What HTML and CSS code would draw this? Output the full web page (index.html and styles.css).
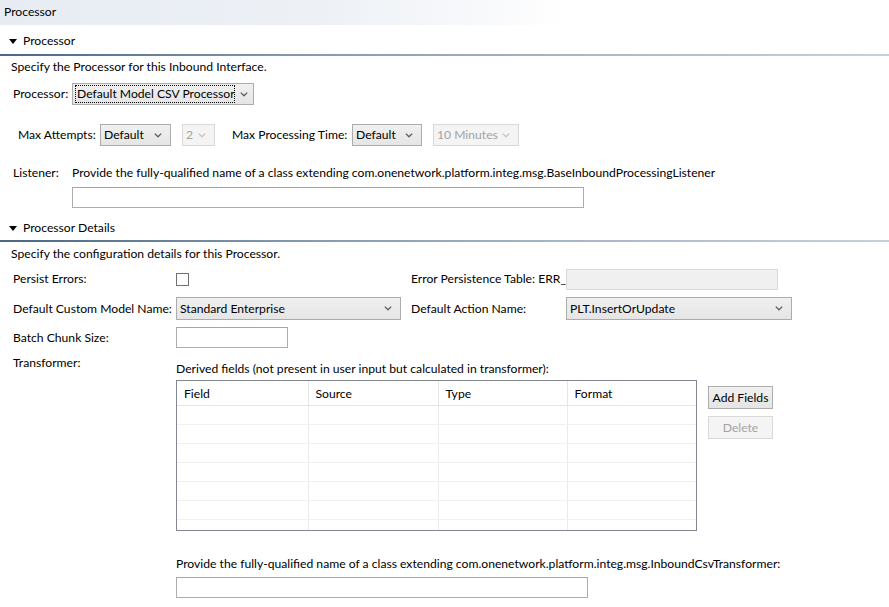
FILE: index.html
```html
<!DOCTYPE html>
<html>
<head>
<meta charset="utf-8">
<title>Processor</title>
<link rel="stylesheet" href="styles.css">
</head>
<body>
<div class="titlebar">Processor</div>

<div class="sec-head"><span class="twisty"></span><span>Processor</span></div>
<div class="sec-line"></div>
<div class="sec1">
  <div class="desc">Specify the Processor for this Inbound Interface.</div>

  <div class="row proc-row">
    <span class="lbl lbl-proc">Processor:</span>
    <div class="combo w-proc"><span class="focus">Default Model CSV Processor</span><svg class="chev" width="8" height="5" viewBox="0 0 8 5"><polyline points="0.8,0.6 4,3.8 7.2,0.6" fill="none" stroke="#5c5c5c" stroke-width="1.3"/></svg></div>
  </div>

  <div class="row max-row">
    <span class="lbl lbl-max">Max Attempts:</span>
    <div class="combo w-att"><span>Default</span><svg class="chev" width="8" height="5" viewBox="0 0 8 5"><polyline points="0.8,0.6 4,3.8 7.2,0.6" fill="none" stroke="#5c5c5c" stroke-width="1.3"/></svg></div>
    <div class="combo disabled w-num"><span>2</span><svg class="chev" width="8" height="5" viewBox="0 0 8 5"><polyline points="0.8,0.6 4,3.8 7.2,0.6" fill="none" stroke="#c4c4c4" stroke-width="1.3"/></svg></div>
    <span class="lbl lbl-time">Max Processing Time:</span>
    <div class="combo w-def"><span>Default</span><svg class="chev" width="8" height="5" viewBox="0 0 8 5"><polyline points="0.8,0.6 4,3.8 7.2,0.6" fill="none" stroke="#5c5c5c" stroke-width="1.3"/></svg></div>
    <div class="combo disabled w-min"><span>10 Minutes</span><svg class="chev" width="8" height="5" viewBox="0 0 8 5"><polyline points="0.8,0.6 4,3.8 7.2,0.6" fill="none" stroke="#c4c4c4" stroke-width="1.3"/></svg></div>
  </div>

  <div class="row listener-row">
    <span class="lbl lbl-proc">Listener:</span>
    <span>Provide the fully-qualified name of a class extending com.onenetwork.platform.integ.msg.BaseInboundProcessingListener</span>
  </div>
  <div class="listener-input"><div class="textbox w-listener"></div></div>
</div>

<div class="sec-head sec-head2"><span class="twisty"></span><span>Processor Details</span></div>
<div class="sec-line"></div>
<div class="sec2">
  <div class="desc desc2">Specify the configuration details for this Processor.</div>

  <div class="drow r1">
    <span class="dlbl">Persist Errors:</span>
    <div class="dcol"><span class="checkbox"></span></div>
    <span class="dlbl2">Error Persistence Table: ERR_</span>
    <div class="textbox disabled w-err"></div>
  </div>

  <div class="drow r2">
    <span class="dlbl">Default Custom Model Name:</span>
    <div class="dcol"><div class="combo w-model"><span>Standard Enterprise</span><svg class="chev" width="8" height="5" viewBox="0 0 8 5"><polyline points="0.8,0.6 4,3.8 7.2,0.6" fill="none" stroke="#5c5c5c" stroke-width="1.3"/></svg></div></div>
    <span class="dlbl2">Default Action Name:</span>
    <div class="combo w-action"><span>PLT.InsertOrUpdate</span><svg class="chev" width="8" height="5" viewBox="0 0 8 5"><polyline points="0.8,0.6 4,3.8 7.2,0.6" fill="none" stroke="#5c5c5c" stroke-width="1.3"/></svg></div>
  </div>

  <div class="drow r3">
    <span class="dlbl">Batch Chunk Size:</span>
    <div class="dcol"><div class="textbox w-batch"></div></div>
  </div>

  <div class="trans">
    <span class="dlbl trans-lbl">Transformer:</span>
    <div class="trans-body">
      <div class="derived">Derived fields (not present in user input but calculated in transformer):</div>
      <div class="table-area">
        <div class="grid-box">
          <table class="grid">
            <thead>
              <tr><th>Field</th><th>Source</th><th>Type</th><th>Format</th></tr>
            </thead>
            <tbody>
              <tr><td></td><td></td><td></td><td></td></tr>
              <tr><td></td><td></td><td></td><td></td></tr>
              <tr><td></td><td></td><td></td><td></td></tr>
              <tr><td></td><td></td><td></td><td></td></tr>
              <tr><td></td><td></td><td></td><td></td></tr>
              <tr><td></td><td></td><td></td><td></td></tr>
              <tr><td></td><td></td><td></td><td></td></tr>
            </tbody>
          </table>
        </div>
        <div class="btns">
          <div class="btn">Add Fields</div>
          <div class="btn disabled">Delete</div>
        </div>
      </div>
      <div class="provide">Provide the fully-qualified name of a class extending com.onenetwork.platform.integ.msg.InboundCsvTransformer:</div>
      <div class="textbox w-trans"></div>
    </div>
  </div>
</div>
</body>
</html>
```

FILE: styles.css
```css
* { box-sizing: border-box; }

html, body {
  margin: 0;
  padding: 0;
  background: #ffffff;
}

body {
  width: 889px;
  height: 607px;
  overflow: hidden;
  font-family: "Lato", "Open Sans", sans-serif;
  font-size: 12.15px;
  line-height: 16px;
  color: #000000;
}

.titlebar {
  height: 25px;
  line-height: 24px;
  padding-left: 4px;
  background: linear-gradient(to right, #e7ecf3 0, #edf1f6 320px, #f8f9fb 480px, #ffffff 570px);
}

.sec-head {
  display: flex;
  align-items: center;
  height: 29px;
  padding: 8px 0 5px 9px;
}

.sec-head2 {
  height: 32px;
  padding: 12px 0 4px 9px;
}

.twisty {
  width: 0;
  height: 0;
  border-left: 4px solid transparent;
  border-right: 4px solid transparent;
  border-top: 5px solid #000000;
  margin-right: 6px;
}

.sec-line {
  height: 2px;
  background: linear-gradient(to right, #4a6784 0, #7f97ad 280px, #a5b6c6 560px, #c6d1dc 889px);
}

.desc {
  margin-top: 3px;
  padding-left: 11px;
}

.row {
  display: flex;
  align-items: center;
}

.lbl-proc { width: 59px; flex: none; }

.proc-row {
  margin-top: 8px;
  padding-left: 13px;
  height: 22px;
}

.max-row {
  margin-top: 19px;
  padding-left: 18px;
  height: 22px;
}

.lbl-max { width: 82px; }
.lbl-time { width: 120px; margin-left: 17px; }

.combo {
  display: flex;
  align-items: center;
  justify-content: space-between;
  height: 100%;
  padding: 0 8px 0 3px;
  background: linear-gradient(#f0f0f0, #e5e5e5);
  border: 1px solid #acacac;
  white-space: nowrap;
}

.combo.disabled {
  background: #f4f4f4;
  border-color: #d9d9d9;
  color: #a3a3a3;
}

.combo .focus {
  flex: none;
  outline: 1px dotted #000000;
  outline-offset: 0;
  width: 158px;
  padding-left: 1px;
  line-height: 16px;
  white-space: nowrap;
}

.chev { flex: none; }

.w-proc { width: 182px; padding-right: 5px; }
.w-att { width: 71px; }
.w-num { width: 33px; margin-left: 11px; }
.w-def { width: 70px; }
.w-min { width: 86px; margin-left: 11px; }

.listener-row {
  margin-top: 19px;
  padding-left: 13px;
  height: 16px;
}

.listener-input {
  margin-top: 6px;
  padding-left: 72px;
}

.textbox {
  height: 21px;
  background: #ffffff;
  border: 1px solid #abadb3;
  border-top-color: #a3a6ad;
}

.textbox.disabled {
  background: #f0f0f0;
  border-color: #d9d9d9;
}

.w-listener { width: 512px; }

.sec2 { padding-left: 13px; }

.desc2 {
  margin-top: 4px;
  padding-left: 0;
  margin-left: -2px;
}

.drow {
  display: flex;
  align-items: center;
}

.r1 { margin-top: 6px; height: 22px; }
.r2 { margin-top: 7px; height: 23px; }
.r3 { margin-top: 7px; height: 21px; }

.dlbl { width: 163px; flex: none; }
.dcol { width: 235px; flex: none; height: 100%; display: flex; align-items: center; }
.dlbl2 { width: 155px; flex: none; }

.checkbox {
  width: 13px;
  height: 13px;
  border: 1px solid #707070;
  background: #ffffff;
}

.w-err { width: 212px; }
.w-model { width: 225px; }
.w-action { width: 226px; height: 100%; }
.w-batch { width: 112px; }

.trans {
  display: flex;
  margin-top: 7px;
}

.trans-body {
  padding-top: 6px;
}

.derived { height: 16px; }

.table-area {
  display: flex;
  margin-top: 3px;
}

.grid-box {
  width: 521px;
  height: 151px;
  border: 1px solid #828790;
  overflow: hidden;
  background: #ffffff;
}

.grid {
  border-collapse: collapse;
  table-layout: fixed;
  width: 519px;
}

.grid th, .grid td {
  padding: 0 0 0 7px;
  border-left: 1px solid #ebebeb;
  text-align: left;
  font-weight: normal;
}

.grid th:first-child, .grid td:first-child { border-left: none; }

.grid th:nth-child(1) { width: 131px; }
.grid th:nth-child(2) { width: 130px; }
.grid th:nth-child(3) { width: 129px; }

.grid th {
  height: 24px;
  padding-top: 2px;
  border-bottom: 1px solid #e5e5e5;
  border-left-color: #e5e5e5;
  vertical-align: middle;
}

.grid td {
  height: 19px;
  border-bottom: 1px solid #f0f0f0;
}

.btns {
  display: flex;
  flex-direction: column;
  gap: 7px;
  margin-left: 11px;
  padding-top: 6px;
}

.btn {
  width: 65px;
  height: 23px;
  line-height: 21px;
  text-align: center;
  border: 1px solid #acacac;
  background: linear-gradient(#f0f0f0, #e5e5e5);
}

.btn.disabled {
  border-color: #d9d9d9;
  background: #f4f4f4;
  color: #a3a3a3;
}

.provide {
  margin-top: 25px;
  height: 16px;
}

.w-trans {
  width: 412px;
  margin-top: 5px;
}
```
